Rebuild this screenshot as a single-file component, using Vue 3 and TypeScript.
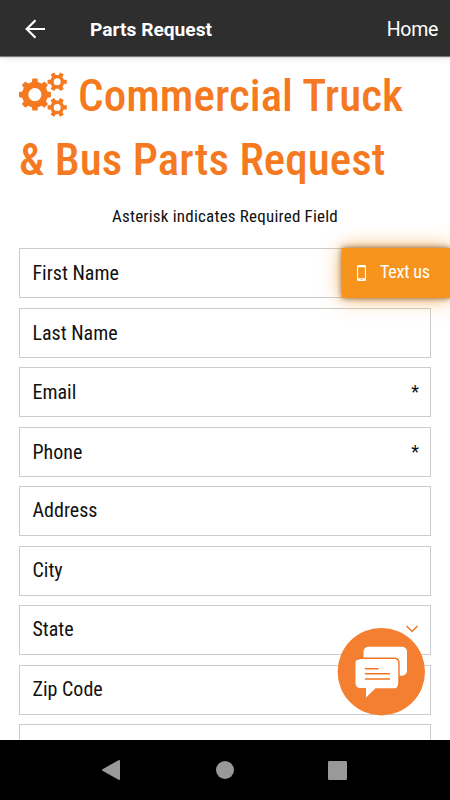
<script setup lang="ts">
interface Field {
  label: string
  required?: boolean
  select?: boolean
}

const fields: Field[] = [
  { label: 'First Name' },
  { label: 'Last Name' },
  { label: 'Email', required: true },
  { label: 'Phone', required: true },
  { label: 'Address' },
  { label: 'City' },
  { label: 'State', select: true },
  { label: 'Zip Code' },
  { label: 'Vehicle' },
]

// Outline of a cog with a round hole, teeth starting at angle zero.
function cog(cx: number, cy: number, teeth: number, outer: number, body: number, hole: number): string {
  const step = (Math.PI * 2) / teeth
  const points: string[] = []
  for (let i = 0; i < teeth; i++) {
    const a = i * step
    const corners: [number, number][] = [
      [body, -0.3],
      [outer, -0.2],
      [outer, 0.2],
      [body, 0.3],
    ]
    for (const [r, k] of corners) {
      points.push(`${(cx + r * Math.cos(a + k * step)).toFixed(2)} ${(cy + r * Math.sin(a + k * step)).toFixed(2)}`)
    }
  }
  return `M${points.join('L')}ZM${cx - hole} ${cy}a${hole} ${hole} 0 1 0 ${hole * 2} 0a${hole} ${hole} 0 1 0 ${-hole * 2} 0Z`
}

const cogs = [cog(15.9, 23.6, 8, 16.2, 13, 6.6), cog(38.2, 10.8, 6, 9.8, 7, 3.5), cog(38.2, 36.4, 6, 9.8, 7, 3.5)]
</script>

<template>
  <div class="screen">
    <header class="topbar">
      <svg class="back" viewBox="0 0 22 20" width="22" height="20"><path d="M21 10H2.7M11.500 1.2 2.7 10l8.8 8.8" /></svg>
      <h1>Parts Request</h1>
      <a class="home">Home</a>
    </header>
    <main class="content">
      <h2>
        <svg class="cogs" viewBox="0 0 48 48" width="48" height="48"><path v-for="d in cogs" :key="d" :d="d" fill-rule="evenodd" /></svg>
        <span>Commercial Truck</span><br />
        <span>&amp; Bus Parts Request</span>
      </h2>
      <p class="hint">Asterisk indicates Required Field</p>
      <form class="fields">
        <label v-for="f in fields" :key="f.label" class="field">
          <span class="name">{{ f.label }}</span>
          <span v-if="f.required" class="star">*</span>
          <svg v-if="f.select" class="chevron" viewBox="0 0 12 8" width="12" height="8"><path d="M.6 1 6 6.5 11.4 1" /></svg>
        </label>
      </form>
    </main>
    <div class="textus">
      <svg viewBox="0 0 9 16" width="9" height="16"><path fill-rule="evenodd" d="M1.5 0h6A1.5 1.5 0 0 1 9 1.500v13A1.500 1.500 0 0 1 7.500 16h-6A1.500 1.500 0 0 1 0 14.500v-13A1.500 1.500 0 0 1 1.500 0ZM1.100 2.200v11h6.800v-11ZM3.700 14.200v.8h1.600v-.8Z" /></svg>
      <span>Text us</span>
    </div>
    <div class="chat">
      <svg viewBox="0 0 88 88" width="88" height="88">
        <circle cx="44.300" cy="43.700" r="43.700" fill="#f57f31" />
        <rect x="26.500" y="18.700" width="43.500" height="29" rx="5" fill="#fff" />
        <path d="M23.500 30.200H57.500q4.500 0 4.500 5v20q0 5-5 5H38.500L29 69.500V60H23.500q-5 0-5-5V35.200q0-5 5-5Z" fill="#fff" />
        <path d="M19.500 32Q21 30.200 23.500 30.200h34q4.500 0 4.500 5v20q0 3-2 4.500" fill="none" stroke="#f47421" stroke-width="1.400" />
        <path d="M28.500 40.700h12.500M28.500 45.700h24M28.500 51h24" stroke="#f47421" stroke-width="1.600" stroke-linecap="round" />
      </svg>
    </div>
    <nav class="navbar">
      <svg viewBox="0 0 22 20" width="22" height="20"><path d="M.5 9.200Q-.3 10 .5 10.800L16.500 19.800Q18 20.400 18 19V1Q18-.4 16.500.2Z" /></svg>
      <svg viewBox="0 0 18 18" width="18" height="18"><circle cx="9" cy="9" r="9" /></svg>
      <svg viewBox="0 0 19 19" width="19" height="19"><rect width="19" height="19" rx="1.200" /></svg>
    </nav>
  </div>
</template>

<style>
body {
  background: #fff;
  overflow: hidden;
}
</style>

<style scoped>
.screen {
  position: relative;
  box-sizing: border-box;
  display: flex;
  flex-direction: column;
  width: 450px;
  height: 800px;
  overflow: hidden;
  background: #fff;
  color: #111;
  font-family: "Roboto Condensed", Roboto, sans-serif;
  font-stretch: 75%;
}
.topbar {
  z-index: 1;
  flex: none;
  box-sizing: border-box;
  display: flex;
  align-items: center;
  height: 56px;
  padding: 2px 12px 0 24px;
  background: #2e2e2e;
  box-shadow: 0 1px 1px #777, 0 2px 6px rgba(0, 0, 0, 0.12);
  color: #fff;
  font-family: Roboto, sans-serif;
  font-stretch: 100%;
}
.back {
  fill: none;
  stroke: #fff;
  stroke-width: 2.2;
}
h1 {
  flex: 1;
  margin: 0 0 0 44px;
  font-size: 19.200px;
  font-weight: 700;
}
.home {
  font-size: 19.500px;
  letter-spacing: -0.3px;
}
.content {
  flex: 1;
  min-height: 0;
  overflow: hidden;
  padding: 8px 19px 0;
}
h2 {
  margin: 0;
  height: 128px;
  color: #f47920;
  font-size: 45px;
  font-weight: 500;
  line-height: 64px;
  letter-spacing: 0.060px;
  white-space: nowrap;
}
.cogs {
  margin-right: 11px;
  fill: #f47920;
  vertical-align: -8px;
}
.hint {
  margin: 12px 0 20px;
  text-align: center;
  font-size: 17px;
  font-weight: 400;
  line-height: 24px;
  letter-spacing: 0.2px;
}
.fields {
  display: flex;
  flex-direction: column;
  gap: 9.500px;
}
.field {
  box-sizing: border-box;
  display: flex;
  justify-content: space-between;
  height: 50px;
  flex: none;
  padding: 0 11px 0 12.500px;
  border: 1px solid #ccc;
  font-size: 20px;
  font-weight: 400;
  line-height: 47px;
}
.field:nth-child(-n + 4) .name {
  line-height: 48px;
}
.star {
  font-size: 18px;
}
.chevron {
  margin: 19px 1px 0 0;
  fill: none;
  stroke: #f47421;
  stroke-width: 1.500;
}
.textus {
  position: absolute;
  z-index: 2;
  top: 248px;
  right: 0;
  box-sizing: border-box;
  display: flex;
  align-items: center;
  gap: 14px;
  width: 108px;
  height: 50px;
  padding-left: 15px;
  background: #f7941e;
  box-shadow: 0 0 6px rgba(80, 50, 20, 0.75), 0 0 20px rgba(247, 148, 30, 0.75);
  color: #fff;
  font-size: 18px;
  line-height: 20px;
  letter-spacing: -0.2px;
}
.textus svg {
  fill: #fff;
}
.textus span {
  padding-bottom: 3px;
}
.chat {
  position: absolute;
  z-index: 2;
  top: 628px;
  left: 337px;
  width: 88px;
  height: 88px;
}
.navbar {
  z-index: 1;
  flex: none;
  display: grid;
  grid-template-columns: repeat(3, 112.500px);
  justify-content: center;
  justify-items: center;
  align-items: center;
  height: 60px;
  background: #000;
}
.navbar svg {
  fill: #999;
}
</style>
